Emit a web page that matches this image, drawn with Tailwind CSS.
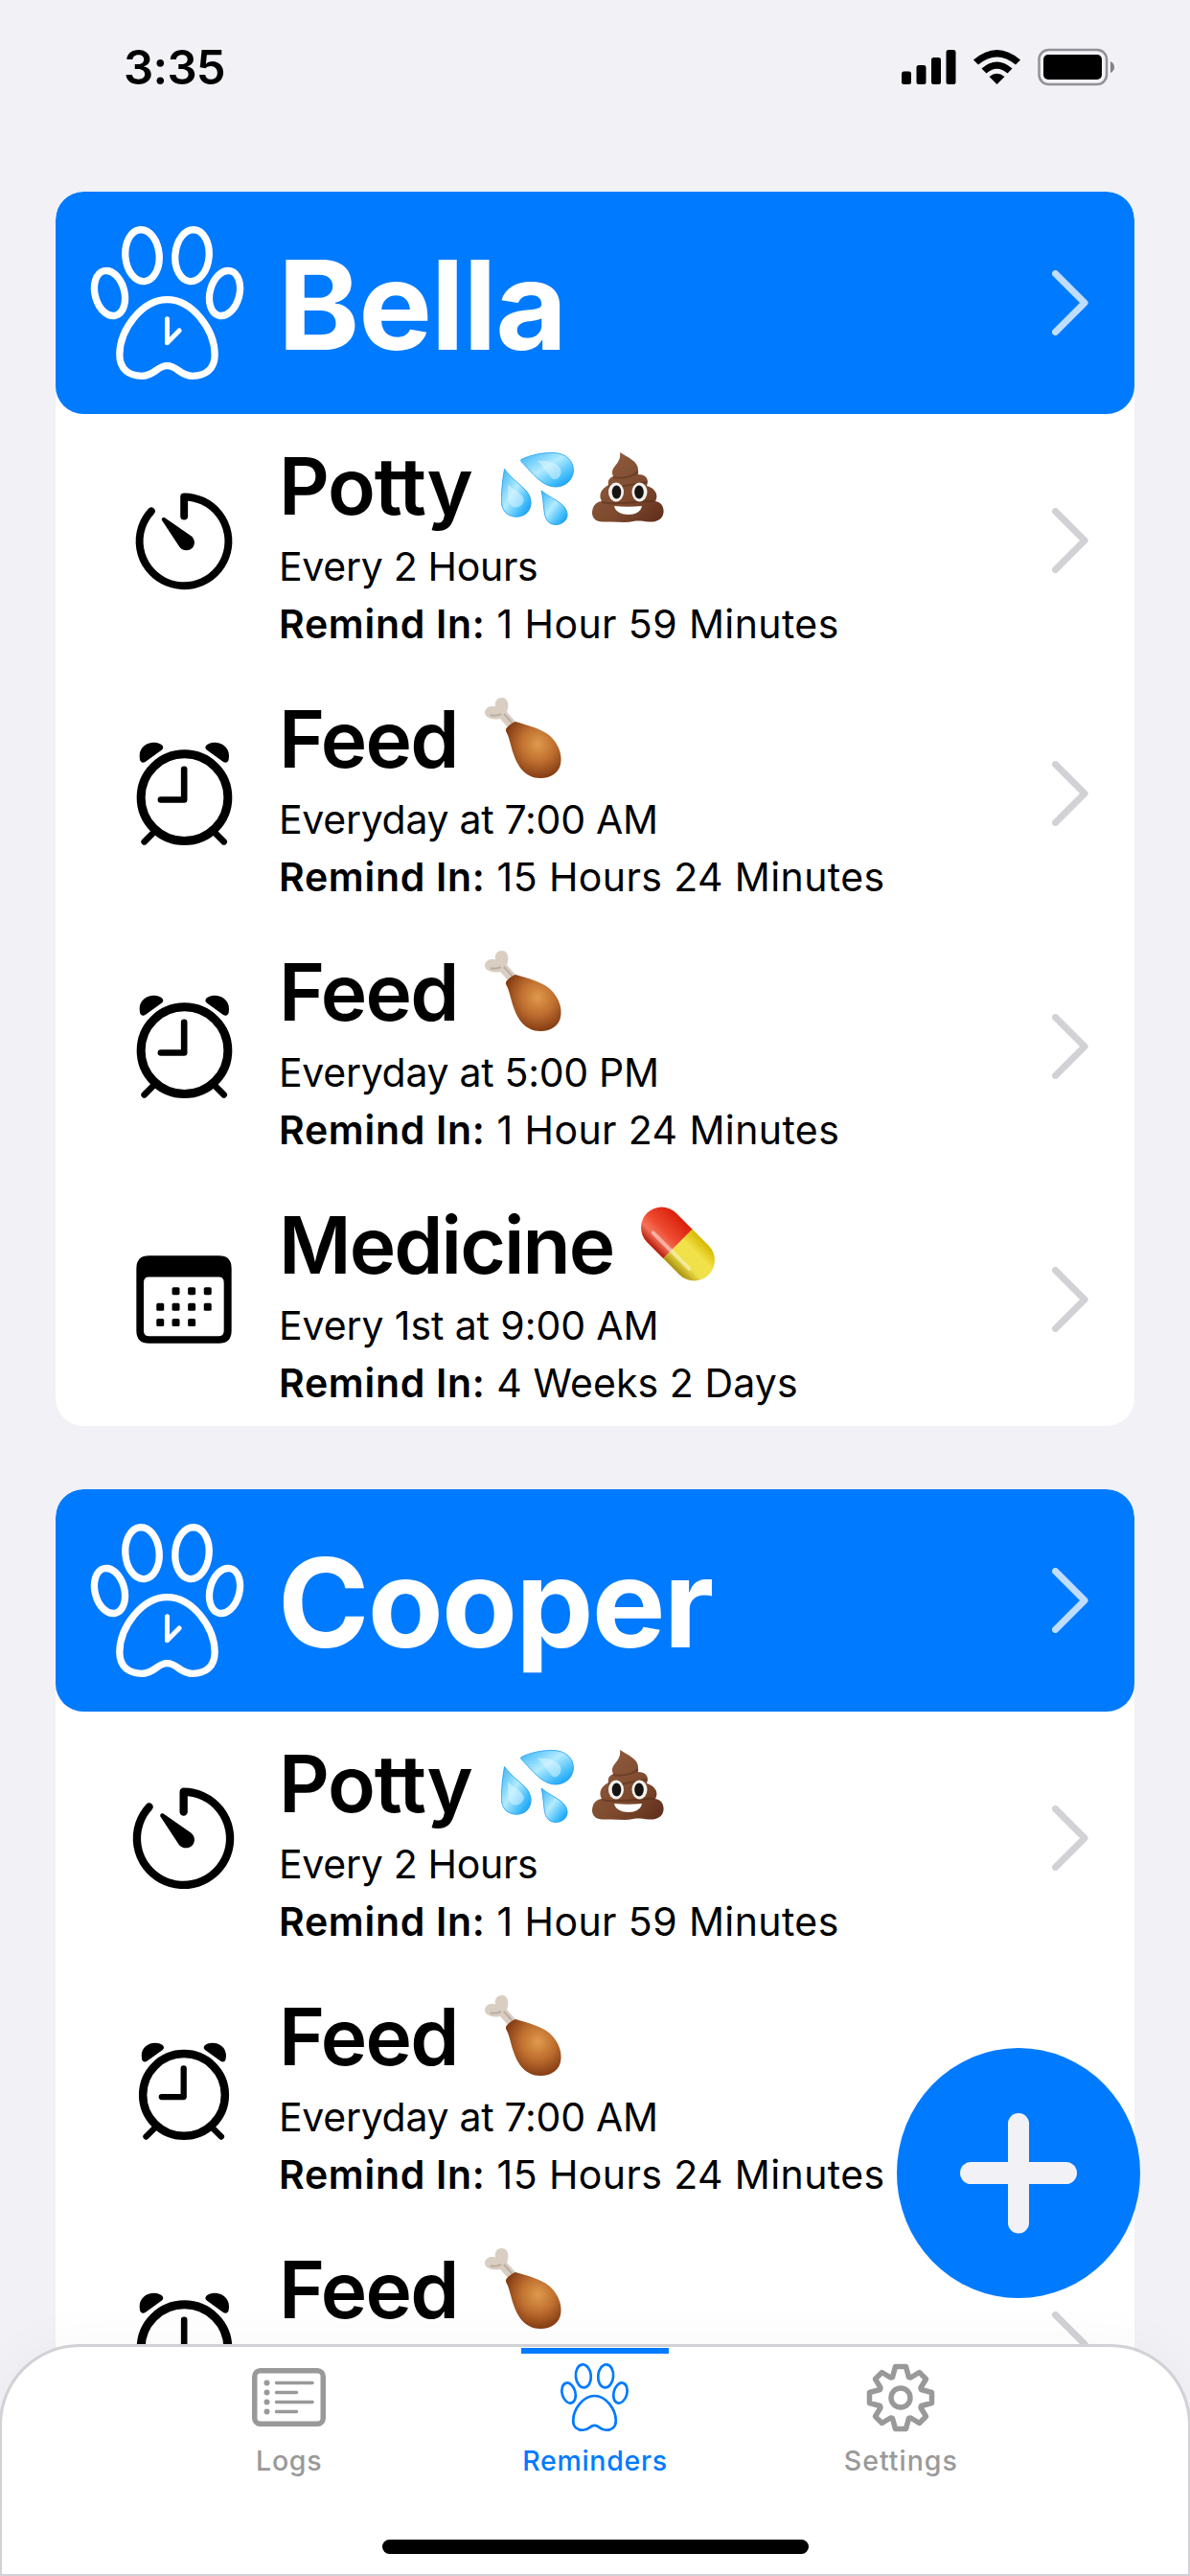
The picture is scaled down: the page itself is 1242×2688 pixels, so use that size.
<!DOCTYPE html>
<html lang="en">
<head>
<meta charset="utf-8">
<title>Reminders</title>
<script src="https://cdn.jsdelivr.net/npm/@tailwindcss/browser@4"></script>
</head>
<body class="bg-[#f2f1f6]">
<svg class="absolute size-0" aria-hidden="true">
  <defs>
    <linearGradient id="water" x1="0" y1="0" x2="1" y2="1"><stop offset="0" stop-color="#35b4f5"/><stop offset=".45" stop-color="#b4ebff"/><stop offset=".75" stop-color="#43bdfb"/><stop offset="1" stop-color="#078ff0"/></linearGradient>
    <linearGradient id="brown" x1="0" y1="0" x2="1" y2="1"><stop offset="0" stop-color="#946043"/><stop offset=".6" stop-color="#7d4a2e"/><stop offset="1" stop-color="#5e2c1a"/></linearGradient>
    <radialGradient id="meat" cx=".58" cy=".4" r=".6"><stop offset="0" stop-color="#de9a4c"/><stop offset=".5" stop-color="#c07030"/><stop offset="1" stop-color="#853d14"/></radialGradient>
    <linearGradient id="red" x1="0" y1="0" x2="0" y2="1"><stop offset="0" stop-color="#d9200c"/><stop offset=".5" stop-color="#ee4a30"/><stop offset=".75" stop-color="#f3745c"/><stop offset="1" stop-color="#b51a06"/></linearGradient>
    <linearGradient id="yellow" x1="0" y1="0" x2="0" y2="1"><stop offset="0" stop-color="#d8b800"/><stop offset=".35" stop-color="#f2e24a"/><stop offset=".7" stop-color="#efe04a"/><stop offset="1" stop-color="#a8900a"/></linearGradient>
  </defs>
  <symbol id="paw" viewBox="40 78 488 486">
    <g fill="none" stroke="currentColor">
      <ellipse cx="206" cy="173" rx="53" ry="81" transform="rotate(-5 206 173)"/>
      <ellipse cx="362" cy="173" rx="53" ry="81" transform="rotate(5 362 173)"/>
      <ellipse cx="104" cy="291" rx="46" ry="72" transform="rotate(-15 104 291)"/>
      <ellipse cx="464" cy="291" rx="46" ry="72" transform="rotate(15 464 291)"/>
      <path d="M284 311C362 311 433 404 433 484C433 530 402 550 364 550C322 550 317 518 284 518C251 518 246 550 204 550C166 550 135 530 135 484C135 404 206 311 284 311Z"/>
    </g>
  </symbol>
  <symbol id="timer" viewBox="60 95 316 318">
    <path d="M217 175V114.5A140.500 140.500 0 1 1 113 160" fill="none" stroke="currentColor" stroke-width="24" stroke-linecap="round" stroke-linejoin="round"/>
    <path d="M147 189C144 182 150 177 157 181L239 238C252 248 253 266 242 277C231 287 213 286 203 274Z" fill="currentColor"/>
  </symbol>
  <symbol id="alarm" viewBox="66 880 304 325">
    <circle cx="218" cy="1055" r="136.500" fill="none" stroke="currentColor" stroke-width="27"/>
    <g fill="none" stroke="currentColor" stroke-width="20" stroke-linecap="round" stroke-linejoin="round"><path d="M217 967V1062H144"/><path d="M92 1194L125 1161M342 1194L309 1161"/></g>
    <path d="M77 925C76 897 100 882 122 882C134 882 144 886 149 892C153 898 151 903 146 906L95 943C88 948 79 945 78 936Z" fill="currentColor"/>
    <path d="M358 925C359 897 335 882 313 882C301 882 291 886 286 892C282 898 284 903 289 906L340 943C347 948 356 945 357 936Z" fill="currentColor"/>
  </symbol>
  <symbol id="calendar" viewBox="67 89 299 277">
    <path fill-rule="evenodd" fill="currentColor" d="M107 90H326Q366 90 366 130V325Q366 365 326 365H107Q67 365 67 325V130Q67 90 107 90ZM106 157Q90 157 90 175V325Q90 343 108 343H324Q342 343 342 325V175Q342 157 326 157Z"/>
    <g fill="currentColor"><rect x="179" y="189" width="24" height="24" rx="5"/><rect x="229" y="189" width="24" height="24" rx="5"/><rect x="279" y="189" width="24" height="24" rx="5"/><rect x="130" y="239" width="24" height="24" rx="5"/><rect x="179" y="239" width="24" height="24" rx="5"/><rect x="229" y="239" width="24" height="24" rx="5"/><rect x="279" y="239" width="24" height="24" rx="5"/><rect x="130" y="288" width="24" height="24" rx="5"/><rect x="179" y="288" width="24" height="24" rx="5"/><rect x="229" y="288" width="24" height="24" rx="5"/></g>
  </symbol>
  <symbol id="chevron" viewBox="0 0 38 68"><path d="M3.500 3.500L34 34L3.500 64.500" fill="none" stroke="currentColor" stroke-width="7" stroke-linecap="round" stroke-linejoin="round"/></symbol>
  <symbol id="drops" viewBox="0 0 76 76">
    <g fill="url(#water)" stroke="#1a9cf0" stroke-width=".8">
      <path d="M21 7.500C30 3 43 0 55 .5C68 1 75.500 9 75.500 19C75 29 67 36 57 36C43 36 33 22 21 9.500Q20 8 21 7.500Z"/>
      <path d="M3.500 17.500C10 27 20 33 27 41C33 49 32 58 27 63C21 69 11 68 6 64C0 59 0 52 .5 44C1 34 2 26 3.500 17.500Z"/>
      <path d="M42 40C49 46 57 49 63 54C69 59 71 66 67 71C62 77 52 77 48 71C44 66 45 52 42 40Z"/>
    </g>
    <path d="M38 9C48 8 57 10 62 17C64 25 59 29 54 28C48 22 45 15 38 9ZM7 33C13 40 23 43 24 50C22 58 13 60 9 54C6 47 8 40 7 33Z" fill="#e2f8ff" opacity=".5"/>
  </symbol>
  <symbol id="poop" viewBox="0 0 75 73">
    <path d="M29 0C37 5 49 10 48 19C48 21 48 22 48 23C56 23 60 28 57 35C65 37 70 44 66 51C73 52 76 59 74 65C72 71 66 73 59 72.500C53 72 48 71 43 72C34 74 25 72 17 72.500C8 73 1 72 0 64C0 57 3 52 10 51C6 44 10 38 17 34C16 29 18 27 22 25C17 15 31 13 29 0Z" fill="url(#brown)"/>
    <path d="M22 26C32 28 43 25 48 20M17 35C28 38 48 32 57 31M10 52C27 56 50 50 65 51" fill="none" stroke="#532717" stroke-width="2" opacity=".45"/>
    <ellipse cx="25" cy="41.500" rx="8" ry="10" fill="#f4f2f0"/><ellipse cx="49.500" cy="41.500" rx="8" ry="10" fill="#f4f2f0"/>
    <ellipse cx="25.500" cy="41.500" rx="4.800" ry="7" fill="#171311"/><ellipse cx="49" cy="41.500" rx="4.800" ry="7" fill="#171311"/>
    <path d="M23 56C32 57 42 57 52 56C51 62 45 65 38 65C31 65 24 62 23 56Z" fill="#fff"/>
  </symbol>
  <symbol id="drumstick" viewBox="0 0 80 84">
    <path d="M25 32L16 22C9 24 0 21 0 15.500C0 10 6 8 11 9.500C10 4 13 0 17.500 0C24 0 26 7 23 15L32 25Z" fill="#d9cec2"/>
    <path d="M6 18C10 20 14 18 17 17M20 17L29 27" fill="none" stroke="#a79a8c" stroke-width="2" opacity=".6"/>
    <path d="M22 33C23 30 29 26 32 25C45 29 63 33 71 43C77 50 80 58 79.500 66C79 78 69 84 58 84C42 84 34 71 30 59C27 51 26 42 22 35Z" fill="url(#meat)"/>
  </symbol>
  <symbol id="pill" viewBox="0 0 77 78">
    <g transform="rotate(45 38.500 39)">
      <path d="M38.500 17.500H14.500A21.500 21.500 0 0 0 14.500 60.500H38.500Z" fill="url(#red)"/>
      <path d="M38.500 17.500H62.500A21.500 21.500 0 0 1 62.500 60.500H38.500Z" fill="url(#yellow)"/>
      <path d="M12 49H65" stroke="#fff" stroke-width="4" stroke-linecap="round" opacity=".45"/>
    </g>
  </symbol>
</svg>

<div class="relative flex h-[2688px] w-[1242px] flex-col overflow-hidden bg-[#f2f1f6] font-['Inter',sans-serif] text-black">
  <header class="flex h-[200px] shrink-0 items-start justify-between pt-[38px] pr-[78px] pl-[129px]">
    <span class="text-[49px] leading-[65px] font-semibold tracking-[-0.7px]">3:35</span>
    <svg class="mt-3 h-[40px] w-[224px]" viewBox="940 50 224 40">
      <rect x="941" y="74.500" width="10" height="13.500" rx="2.500"/><rect x="956.500" y="68" width="10" height="20" rx="2.500"/><rect x="972" y="60" width="10" height="28" rx="2.500"/><rect x="987.500" y="52" width="10" height="36" rx="2.500"/>
      <path d="M1016 62.500Q1040.500 41.500 1065 62.500L1060 67.500Q1040.500 51.500 1021 67.500Z"/>
      <path d="M1024.500 71.500Q1040.500 57.500 1056.500 71.500L1051.500 76.500Q1040.500 67 1029.500 76.500Z"/>
      <path d="M1032.500 80Q1040.500 73.500 1048.500 80L1040.500 88Z"/>
      <rect x="1084.500" y="52" width="70.500" height="36" rx="10" fill="none" stroke="#929196" stroke-width="2.500"/>
      <rect x="1089" y="57" width="61" height="26" rx="5"/>
      <path d="M1159 64Q1163 66 1163 70T1159 76Z" fill="#828186"/>
    </svg>
  </header>

  <main class="flex flex-col gap-[66px] px-[58px]">
    <section class="overflow-hidden rounded-[29px] bg-white">
      <div class="flex h-[232px] items-center rounded-[29px] bg-[#007aff] pr-12 pl-[35px] text-white">
        <svg class="h-[162px] w-[163px]" viewBox="0 0 488 486"><use href="#paw" width="488" height="486" stroke-width="22"/><path d="M244 293V368L282 330" fill="none" stroke="currentColor" stroke-width="15" stroke-linecap="round" stroke-linejoin="round"/></svg>
        <h2 class="ml-[34px] pt-1 text-[129px] leading-[140px] font-bold tracking-[-1.2px]">Bella</h2>
        <svg class="ml-auto h-[68px] w-[38px] text-white/75"><use href="#chevron"/></svg>
      </div>
      <article class="flex h-[264px] items-center pr-12 pl-[78px]">
        <div class="flex w-[112px] justify-center"><svg class="h-[105px] w-[105px]"><use href="#timer"/></svg></div>
        <div class="ml-[43px] flex h-full flex-col pt-[25px] text-[41px] leading-[60px]">
          <div class="mb-1 flex h-[100px] items-start"><h3 class="w-[232px] text-[82px] leading-[102px] font-semibold tracking-[-1.2px]">Potty</h3><svg class="mt-[15px] h-[76px] w-[76px]"><use href="#drops"/></svg><svg class="mt-[15px] ml-[19px] h-[73px] w-[75px]"><use href="#poop"/></svg></div>
          <p class="tracking-[-0.3px]">Every 2 Hours</p><p class="tracking-[0.4px]"><b class="font-semibold tracking-[0.7px]">Remind In:</b> 1 Hour 59 Minutes</p>
        </div>
        <svg class="ml-auto h-[68px] w-[38px] text-[#d1d1d6]"><use href="#chevron"/></svg>
      </article>
      <article class="flex h-[264px] items-center pr-12 pl-[78px]">
        <div class="flex w-[112px] justify-center"><svg class="h-[108px] w-[101px]"><use href="#alarm"/></svg></div>
        <div class="ml-[43px] flex h-full flex-col pt-[25px] text-[41px] leading-[60px]">
          <div class="mb-1 flex h-[100px] items-start"><h3 class="w-[215px] text-[82px] leading-[102px] font-semibold tracking-[-1.8px]">Feed</h3><svg class="mt-[7px] h-[84px] w-[80px]"><use href="#drumstick"/></svg></div>
          <p class="tracking-[-0.3px]">Everyday at 7:00 AM</p><p class="tracking-[0.4px]"><b class="font-semibold tracking-[0.7px]">Remind In:</b> 15 Hours 24 Minutes</p>
        </div>
        <svg class="ml-auto h-[68px] w-[38px] text-[#d1d1d6]"><use href="#chevron"/></svg>
      </article>
      <article class="flex h-[264px] items-center pr-12 pl-[78px]">
        <div class="flex w-[112px] justify-center"><svg class="h-[108px] w-[101px]"><use href="#alarm"/></svg></div>
        <div class="ml-[43px] flex h-full flex-col pt-[25px] text-[41px] leading-[60px]">
          <div class="mb-1 flex h-[100px] items-start"><h3 class="w-[215px] text-[82px] leading-[102px] font-semibold tracking-[-1.8px]">Feed</h3><svg class="mt-[7px] h-[84px] w-[80px]"><use href="#drumstick"/></svg></div>
          <p class="tracking-[-0.3px]">Everyday at 5:00 PM</p><p class="tracking-[0.4px]"><b class="font-semibold tracking-[0.7px]">Remind In:</b> 1 Hour 24 Minutes</p>
        </div>
        <svg class="ml-auto h-[68px] w-[38px] text-[#d1d1d6]"><use href="#chevron"/></svg>
      </article>
      <article class="flex h-[264px] items-center pr-12 pl-[78px]">
        <div class="flex w-[112px] justify-center"><svg class="h-[92px] w-[100px]"><use href="#calendar"/></svg></div>
        <div class="ml-[43px] flex h-full flex-col pt-[25px] text-[41px] leading-[60px]">
          <div class="mb-1 flex h-[100px] items-start"><h3 class="w-[378px] text-[82px] leading-[102px] font-semibold tracking-[-1.9px]">Medicine</h3><svg class="mt-[10px] h-[78px] w-[77px]"><use href="#pill"/></svg></div>
          <p class="tracking-[-0.1px]">Every 1st at 9:00 AM</p><p class="tracking-[0.1px]"><b class="font-semibold tracking-[0.7px]">Remind In:</b> 4 Weeks 2 Days</p>
        </div>
        <svg class="ml-auto h-[68px] w-[38px] text-[#d1d1d6]"><use href="#chevron"/></svg>
      </article>
    </section>

    <section class="overflow-hidden rounded-t-[29px] bg-white">
      <div class="flex h-[232px] items-center rounded-[29px] bg-[#007aff] pr-12 pl-[35px] text-white">
        <svg class="h-[162px] w-[163px]" viewBox="0 0 488 486"><use href="#paw" width="488" height="486" stroke-width="22"/><path d="M244 293V368L282 330" fill="none" stroke="currentColor" stroke-width="15" stroke-linecap="round" stroke-linejoin="round"/></svg>
        <h2 class="ml-[34px] pt-1 text-[129px] leading-[140px] font-bold tracking-[-1.8px]">Cooper</h2>
        <svg class="ml-auto h-[68px] w-[38px] text-white/75"><use href="#chevron"/></svg>
      </div>
      <article class="flex h-[264px] items-center pr-12 pl-[78px]">
        <div class="flex w-[112px] justify-center"><svg class="h-[110px] w-[110px]"><use href="#timer"/></svg></div>
        <div class="ml-[43px] flex h-full flex-col pt-[25px] text-[41px] leading-[60px]">
          <div class="mb-1 flex h-[100px] items-start"><h3 class="w-[232px] text-[82px] leading-[102px] font-semibold tracking-[-1.2px]">Potty</h3><svg class="mt-[15px] h-[76px] w-[76px]"><use href="#drops"/></svg><svg class="mt-[15px] ml-[19px] h-[73px] w-[75px]"><use href="#poop"/></svg></div>
          <p class="tracking-[-0.3px]">Every 2 Hours</p><p class="tracking-[0.4px]"><b class="font-semibold tracking-[0.7px]">Remind In:</b> 1 Hour 59 Minutes</p>
        </div>
        <svg class="ml-auto h-[68px] w-[38px] text-[#d1d1d6]"><use href="#chevron"/></svg>
      </article>
      <article class="flex h-[264px] items-center pr-12 pl-[78px]">
        <div class="flex w-[112px] justify-center"><svg class="h-[102px] w-[96px]"><use href="#alarm"/></svg></div>
        <div class="ml-[43px] flex h-full flex-col pt-[25px] text-[41px] leading-[60px]">
          <div class="mb-1 flex h-[100px] items-start"><h3 class="w-[215px] text-[82px] leading-[102px] font-semibold tracking-[-1.8px]">Feed</h3><svg class="mt-[7px] h-[84px] w-[80px]"><use href="#drumstick"/></svg></div>
          <p class="tracking-[-0.3px]">Everyday at 7:00 AM</p><p class="tracking-[0.4px]"><b class="font-semibold tracking-[0.7px]">Remind In:</b> 15 Hours 24 Minutes</p>
        </div>
      </article>
      <article class="flex h-[264px] items-center pr-12 pl-[78px]">
        <div class="flex w-[112px] justify-center"><svg class="h-[108px] w-[101px]"><use href="#alarm"/></svg></div>
        <div class="ml-[43px] flex h-full flex-col pt-[25px] text-[41px] leading-[60px]">
          <div class="mb-1 flex h-[100px] items-start"><h3 class="w-[215px] text-[82px] leading-[102px] font-semibold tracking-[-1.8px]">Feed</h3><svg class="mt-[7px] h-[84px] w-[80px]"><use href="#drumstick"/></svg></div>
        </div>
        <svg class="ml-auto h-[68px] w-[38px] text-[#d1d1d6]"><use href="#chevron"/></svg>
      </article>
    </section>
  </main>

  <!-- Floating add button -->
  <button class="absolute top-[2137px] left-[936px] flex h-[261px] w-[254px] items-center justify-center rounded-[50%] bg-[#007aff]">
    <svg class="h-[126px] w-[122px]" viewBox="0 0 122 126" fill="#f2f1f6"><rect x="50" width="22" height="125.500" rx="11"/><rect y="51" width="122" height="23" rx="11.500"/></svg>
  </button>

  <!-- Tab bar -->
  <nav class="absolute bottom-0 -left-px flex h-[242px] w-[1244px] flex-col items-center rounded-t-[84px] border-x-3 border-t-3 border-b-2 border-[#d1d1d6] bg-white shadow-[0_0_60px_rgba(0,0,0,0.035)]">
    <div class="grid w-[958px] grid-cols-3 text-[28.500px] leading-[37px] font-medium tracking-[0.7px] text-[#999]">
      <a class="flex flex-col items-center">
        <span class="flex h-[100px] items-center pt-[5px]"><svg class="h-[61px] w-[77px]" viewBox="0 0 77 61" fill="none" stroke="currentColor" stroke-width="5.500"><rect x="2.750" y="2.750" width="71.500" height="55.500" rx="6"/><g stroke-width="3.600" stroke-linecap="round"><path d="M25.500 15.500H63M25.500 25.500H46.500M25.500 35.500H63M25.500 45.500H46.500"/><path d="M15.500 15.500h.01M15.500 25.500h.01M15.500 35.500h.01M15.500 45.500h.01" stroke-width="6"/></g></svg></span>
        <span>Logs</span>
      </a>
      <a class="flex flex-col items-center text-[#007aff]">
        <span class="flex h-[100px] flex-col items-center"><i class="mt-px h-[6px] w-[154px] bg-[#007aff]"></i><svg class="mt-[9px] h-[73px] w-[73px]"><use href="#paw" stroke-width="18"/></svg></span>
        <span>Reminders</span>
      </a>
      <a class="flex flex-col items-center">
        <span class="flex h-[100px] items-center pt-[5px]"><svg class="h-[72px] w-[72px]" viewBox="-36 -36 72 72" fill="none" stroke="currentColor" stroke-width="5.500" stroke-linejoin="round"><circle r="10"/><path d="M-5.500 -32.500H5.500L8.500 -21.500L10.500 -21L19.500 -26.500L26.500 -19.500L21 -10.500L21.500 -8.500L32.500 -5.500V5.500L21.500 8.500L21 10.500L26.500 19.500L19.500 26.500L10.500 21L8.500 21.500L5.500 32.500H-5.500L-8.500 21.500L-10.500 21L-19.500 26.500L-26.500 19.500L-21 10.500L-21.500 8.500L-32.500 5.500V-5.500L-21.500 -8.500L-21 -10.500L-26.500 -19.500L-19.500 -26.500L-10.500 -21L-8.500 -21.500Z"/></svg></span>
        <span class="tracking-[1px]">Settings</span>
      </a>
    </div>
    <div class="mt-[64px] h-[15px] w-[445px] rounded-full bg-black"></div>
  </nav>
</div>
</body>
</html>
